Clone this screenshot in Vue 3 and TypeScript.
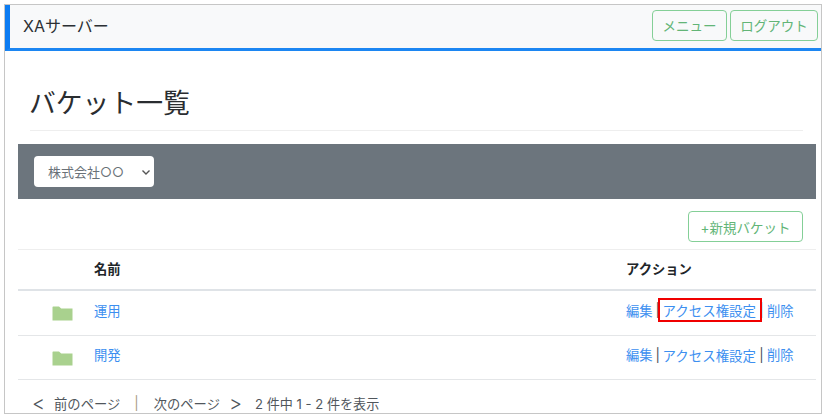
<template>
  <div class="frame">
    <header class="topbar">
      <span class="brand">XAサーバー</span>
      <div class="top-actions">
        <button class="btn menu-btn">メニュー</button>
        <button class="btn logout-btn">ログアウト</button>
      </div>
    </header>

    <main class="page">
      <div class="title-wrap">
        <h1 class="title">バケット一覧</h1>
      </div>

      <div class="filter-band">
        <div class="company-select">
          <span>株式会社○○</span>
          <svg class="chevron" width="10" height="6" viewBox="0 0 10 6">
            <path d="M1.5 1.5l3.5 3.5 3.5-3.5" fill="none" stroke="#555" stroke-width="1.4" />
          </svg>
        </div>
      </div>

      <div class="tools">
        <button class="btn new-btn">+新規バケット</button>
      </div>

      <div class="row head-row">
        <div></div>
        <div class="name-col">名前</div>
        <div>アクション</div>
      </div>
      <div v-for="(b, i) in buckets" :key="b" class="row body-row">
        <div class="icon-col">
          <svg width="21" height="15" viewBox="0 0 21 15">
            <path d="M0.5 1.2Q0.5 0.5 1.2 0.5H7L9.2 2.6H20.5V14.5H0.5Z" fill="#a9d18e" />
          </svg>
        </div>
        <div class="name-col"><a class="link">{{ b }}</a></div>
        <div class="actions">
          <a class="link">編集</a>
          <span class="pipe first">|</span>
          <a class="link access" :class="{ marked: i === 0 }">アクセス権設定</a>
          <span class="pipe">|</span>
          <a class="link">削除</a>
        </div>
      </div>

      <footer class="pager">
        <span class="arrow prev">&lt;</span>
        <span>前のページ</span>
        <span class="sep">|</span>
        <span>次のページ</span>
        <span class="arrow next">&gt;</span>
        <span class="count">2 件中 1 - 2 件を表示</span>
      </footer>
    </main>
  </div>
</template>

<script setup lang="ts">
const buckets: string[] = ['運用', '開発']
</script>

<style>
html,
body {
  margin: 0;
  background: #fff;
  overflow: hidden;
}
</style>

<style scoped>
.frame {
  box-sizing: border-box;
  width: 818px;
  height: 410px;
  margin: 4px 0 0 4px;
  border: 1px solid #c6c6c6;
  font-family: "Inter", "Noto Sans CJK JP", sans-serif;
  font-size: 13.3px;
  color: #212529;
}

.topbar {
  box-sizing: border-box;
  height: 46px;
  display: flex;
  align-items: center;
  justify-content: space-between;
  padding: 0 3px 3px 13px;
  background: #f8f9fa;
  border-left: 5px solid #0d7cf2;
  border-bottom: 3px solid #1c86f2;
}

.brand {
  font-size: 16px;
  color: #2b2f33;
}

.top-actions {
  display: flex;
  gap: 3px;
}

.btn {
  box-sizing: border-box;
  height: 31px;
  padding: 0;
  background: transparent;
  border: 1px solid #84cf97;
  border-radius: 4px;
  color: #62b577;
  font-family: inherit;
  font-size: 13.5px;
}

.menu-btn {
  width: 75px;
}

.logout-btn {
  width: 88px;
}

.title-wrap {
  margin: 0 18px 0 25px;
  height: 79px;
  border-bottom: 1px solid #eeeeee;
  display: flex;
  align-items: center;
}

.title {
  margin: 26px 0 0 -1px;
  font-size: 26.8px;
  font-weight: 400;
  line-height: 1.2;
  color: #2a2d30;
}

.filter-band {
  margin: 13px 5px 0 13px;
  height: 55px;
  background: #6c757d;
  display: flex;
  align-items: center;
  padding-left: 16px;
}

.company-select {
  box-sizing: border-box;
  width: 120px;
  height: 31px;
  padding: 0 3px 0 14px;
  background: #fff;
  border-radius: 4px;
  display: flex;
  align-items: center;
  justify-content: space-between;
  color: #6a7178;
  font-size: 13px;
}

.chevron {
  flex: none;
}

.tools {
  margin: 12px 18px 0 13px;
  height: 38px;
  display: flex;
  justify-content: flex-end;
  align-items: flex-start;
}

.new-btn {
  width: 115px;
  height: 31px;
}

.row {
  box-sizing: border-box;
  margin: 0 5px 0 13px;
  display: grid;
  grid-template-columns: 76px 532px 1fr;
  align-items: center;
}

.head-row {
  height: 42px;
  border-top: 1px solid #eeeeee;
  border-bottom: 2px solid #dfe3e7;
  font-weight: 700;
  padding-bottom: 2px;
}

.body-row {
  height: 44.5px;
  border-bottom: 1px solid #e4e6e8;
  padding-bottom: 5px;
}

.icon-col {
  display: flex;
  padding-left: 34px;
  padding-top: 7px;
}

.link {
  color: #3c8ff0;
}

.actions {
  display: flex;
  align-items: center;
  white-space: nowrap;
}

.pipe {
  width: 11px;
  text-align: center;
  color: #4a5056;
}

.pipe.first {
  width: 10px;
}

.access {
  position: relative;
  font-size: 13.45px;
}

.access.marked::after {
  content: "";
  position: absolute;
  inset: -2px -6px -2px -5px;
  border: 2px solid #f00000;
}

.pager {
  height: 44px;
  padding: 2px 0 0 27px;
  box-sizing: border-box;
  display: flex;
  align-items: center;
  color: #50565c;
  white-space: nowrap;
}

.arrow {
  font-size: 20px;
  font-weight: 300;
  line-height: 1;
  color: #50565c;
}

.prev {
  margin-right: 9px;
}

.sep {
  margin: 0 15px 0 14px;
  color: #a89c84;
}

.next {
  margin: 0 13px 0 9px;
}

.count {
  font-size: 13.1px;
}
</style>
